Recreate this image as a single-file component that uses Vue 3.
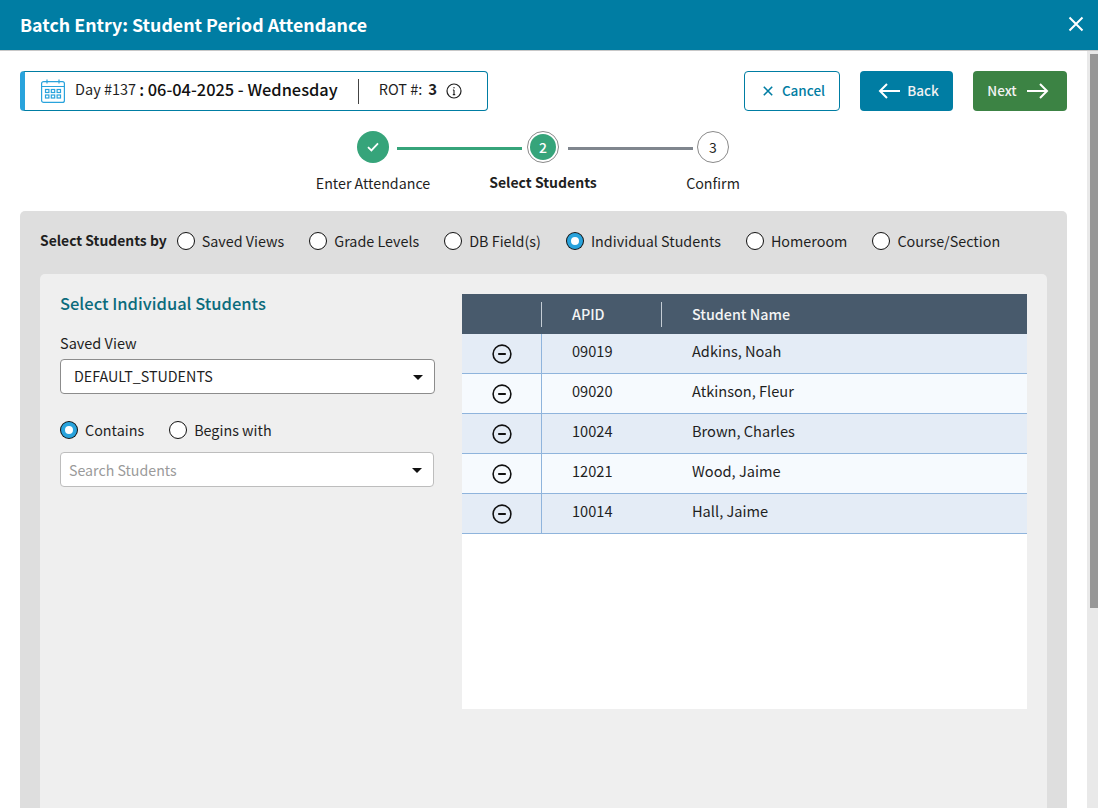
<script setup>
const stepLabels = [
  { label: 'Enter Attendance', cls: '' },
  { label: 'Select Students', cls: 'bold' },
  { label: 'Confirm', cls: '' },
]
const modes = [
  { label: 'Saved Views', on: false },
  { label: 'Grade Levels', on: false },
  { label: 'DB Field(s)', on: false },
  { label: 'Individual Students', on: true },
  { label: 'Homeroom', on: false },
  { label: 'Course/Section', on: false },
]
const students = [
  { id: '09019', name: 'Adkins, Noah' },
  { id: '09020', name: 'Atkinson, Fleur' },
  { id: '10024', name: 'Brown, Charles' },
  { id: '12021', name: 'Wood, Jaime' },
  { id: '10014', name: 'Hall, Jaime' },
]
</script>

<template>
  <div class="modal">
    <header class="titlebar">
      <h1>Batch Entry: Student Period Attendance</h1>
      <svg class="close" width="16" height="16" viewBox="0 0 16 16"><path d="M1.5 1.5l13 13M14.5 1.5l-13 13" stroke="#fff" stroke-width="2" fill="none"/></svg>
    </header>
    <div class="body">
      <main class="content">
        <div class="toolbar">
          <div class="daybox">
            <svg class="cal" width="24" height="24" viewBox="0 0 24 24" fill="none" stroke="#29a3dc" stroke-width="1.2">
              <rect x="0.6" y="2.6" width="22.8" height="20.8" rx="2"/>
              <path d="M1 7.5h22M6 0.5v4M18 0.5v4"/>
              <g fill="none">
                <rect x="4.5" y="10.5" width="3.4" height="3"/><rect x="10.3" y="10.5" width="3.4" height="3"/><rect x="16.1" y="10.5" width="3.4" height="3"/>
                <rect x="4.5" y="16" width="3.4" height="3"/><rect x="10.3" y="16" width="3.4" height="3"/><rect x="16.1" y="16" width="3.4" height="3"/>
              </g>
            </svg>
            <span class="day">Day #137</span>
            <span class="date">: 06-04-2025 - Wednesday</span>
            <span class="divider"></span>
            <span class="rot">ROT #:</span>
            <b class="rotnum">3</b>
            <svg class="info" width="16" height="16" viewBox="0 0 16 16" fill="none" stroke="#1f1f1f" stroke-width="1.2">
              <circle cx="8" cy="8" r="7"/><path d="M8 7v4.6M6.8 11.6h2.4M6.9 7h1.1" stroke-width="1.1"/><circle cx="8" cy="4.7" r=".7" fill="#1f1f1f" stroke="none"/>
            </svg>
          </div>
          <div class="actions">
            <button class="btn cancel">
              <svg width="10" height="10" viewBox="0 0 10 10"><path d="M.8.8l8.4 8.4M9.2.8L.8 9.2" stroke="#007da3" stroke-width="1.6" fill="none"/></svg>
              <span>Cancel</span>
            </button>
            <button class="btn back">
              <svg width="23" height="16" viewBox="0 0 23 16" fill="none" stroke="#fff" stroke-width="2"><path d="M22 8H2M9 1L2 8l7 7"/></svg>
              <span>Back</span>
            </button>
            <button class="btn next">
              <span>Next</span>
              <svg width="23" height="16" viewBox="0 0 23 16" fill="none" stroke="#fff" stroke-width="2"><path d="M1 8h20M14 1l7 7-7 7"/></svg>
            </button>
          </div>
        </div>

        <div class="stepper">
          <div class="dots">
            <span class="dot done">
              <svg width="12" height="10" viewBox="0 0 12 10" fill="none" stroke="#fff" stroke-width="1.8"><path d="M1 5.2l3.4 3.2L11 1.4"/></svg>
            </span>
            <span class="line green"></span>
            <span class="dot current"><span>2</span></span>
            <span class="line grey"></span>
            <span class="dot todo">3</span>
          </div>
          <div class="labels">
            <span v-for="s in stepLabels" :key="s.label" :class="s.cls">{{ s.label }}</span>
          </div>
        </div>

        <section class="panel">
          <div class="modes">
            <strong class="by">Select Students by</strong>
            <label v-for="m in modes" :key="m.label" class="radio">
              <span class="circle" :class="{ on: m.on }"></span><span class="rtext">{{ m.label }}</span>
            </label>
          </div>
          <div class="inner">
            <div class="left">
              <h2>Select Individual Students</h2>
              <div class="fieldlabel">Saved View</div>
              <div class="select dark">DEFAULT_STUDENTS<span class="caret"></span></div>
              <div class="match">
                <label class="radio"><span class="circle on"></span><span class="rtext">Contains</span></label>
                <label class="radio"><span class="circle"></span><span class="rtext">Begins with</span></label>
              </div>
              <div class="select light">Search Students<span class="caret"></span></div>
            </div>
            <div class="right">
              <div class="thead">
                <div class="c0"></div>
                <div class="c1">APID</div>
                <div class="c2">Student Name</div>
              </div>
              <div v-for="s in students" :key="s.id" class="row">
                <div class="c0">
                  <svg width="20" height="20" viewBox="0 0 20 20" fill="none" stroke="#111" stroke-width="1.6"><circle cx="10" cy="10" r="8.9"/><path d="M6.2 10h7.6" stroke-width="2"/></svg>
                </div>
                <div class="c1">{{ s.id }}</div>
                <div class="c2">{{ s.name }}</div>
              </div>
            </div>
          </div>
        </section>
      </main>
      <div class="scrollbar"><div class="thumb"></div></div>
    </div>
  </div>
</template>

<style>
html, body { margin: 0; overflow: hidden; background: #fff; }
</style>

<style scoped>
* { box-sizing: border-box; }
.modal {
  width: 1098px; height: 808px; display: flex; flex-direction: column; overflow: hidden;
  font-family: "Noto Sans CJK SC", "Noto Sans", sans-serif; font-size: 14.3px; color: #1f1f1f; background: #fff;
}
.titlebar {
  height: 51px; flex: none; background: #007da3; border-bottom: 1px solid #c8c8c8;
  display: flex; align-items: center; justify-content: space-between; padding: 0 14px 2px 20px;
}
h1 { margin: 0; font-size: 17.8px; font-weight: 600; color: #fff; }
.close { display: block; }
.body { flex: 1; display: flex; min-height: 0; }
.content { flex: 1; padding: 20px 20px 0; min-width: 0; overflow: hidden; }
.toolbar { display: flex; justify-content: space-between; align-items: center; height: 40px; }
.daybox {
  width: 468px; height: 40px; border: 1px solid #007da3; border-left: 5px solid #29a3dc; border-radius: 4px;
  display: flex; align-items: center; padding-left: 16px; line-height: 20px;
}
.cal { margin-right: 10px; }
.day, .date, .rot, .rotnum { position: relative; top: -2px; }
.day { font-size: 14.5px; }
.date { font-size: 16.4px; font-weight: 500; margin-left: 3px; color: #111; }
.divider { width: 1px; height: 25px; background: #444; margin: 0 20px; }
.rot { font-size: 14.5px; }
.rotnum { font-size: 15px; font-weight: 600; margin: 0 9px 0 6px; }
.actions { display: flex; gap: 20px; }
.btn {
  height: 40px; border-radius: 4px; font-family: inherit; font-size: 13.5px; font-weight: 500;
  display: flex; align-items: center; justify-content: center; padding: 0; border: 0; color: #f2f2f2;
}
.btn span { position: relative; top: -1px; }
.cancel { width: 96px; background: #fff; border: 1px solid #007da3; color: #007da3; gap: 9px; padding-left: 4px; }
.back { width: 93px; background: #007da3; gap: 6px; padding-left: 4px; }
.next { width: 94px; background: #3c8344; gap: 9px; padding-right: 4px; }
.stepper { margin-top: 20px; }
.dots { display: flex; align-items: center; padding-left: 337px; height: 32px; }
.dot {
  width: 32px; height: 32px; border-radius: 50%; flex: none;
  display: flex; align-items: center; justify-content: center; font-size: 14px;
}
.done { background: #36a47a; }
.current { border: 1px solid #8a8a8a; background: #fff; padding: 2px; color: #fff; font-weight: 500; }
.current span { width: 100%; height: 100%; border-radius: 50%; background: #36a47a; display: flex; align-items: center; justify-content: center; }
.todo { border: 1px solid #8a8a8a; background: #fff; }
.line { width: 125px; height: 3px; margin: 2px 5px 0 8px; }
.line.green { background: #36a47a; }
.line.grey { background: #80868e; margin-left: 9px; margin-right: 4px; }
.labels { height: 31px; display: grid; grid-template-columns: 170px 170px 170px; margin-left: 268px; padding-top: 9px; }
.labels span { text-align: center; font-size: 14.25px; line-height: 21px; }
.labels .bold { font-weight: 600; font-size: 14px; }
.panel { height: 620px; margin-top: 17px; background: #dedede; border-radius: 5px 5px 0 0; padding: 20px; }
.modes { display: flex; align-items: center; height: 20px; gap: 25px; margin-bottom: 23px; }
.by { font-weight: 600; font-size: 13.9px; margin-right: -15px; position: relative; top: -1px; }
.radio { display: flex; align-items: center; gap: 7px; font-size: 14.35px; }
.rtext { position: relative; top: -1px; }
.circle { width: 18px; height: 18px; border-radius: 50%; border: 1px solid #111; background: #fff; flex: none; }
.circle.on { background: #fff; border: 4px solid #29a3dc; box-shadow: 0 0 0 1px #111; width: 16px; height: 16px; margin: 1px; }
.inner { height: 560px; background: #efefef; border-radius: 5px 5px 0 0; padding: 18px 20px 0; display: flex; }
.left { width: 375px; flex: none; }
h2 { margin: 0; font-size: 16.5px; line-height: 22px; font-weight: 500; color: #0b6b7c; }
.fieldlabel { margin-top: 18px; font-size: 14.5px; line-height: 21px; }
.select {
  position: relative; background: #fff; border-radius: 4px; display: flex; align-items: center;
  border: 1px solid #8c8c8c; height: 35px; margin-top: 6px; padding: 0 0 2px 13px; font-size: 14.3px;
}
.select.light { width: 374px; border-color: #bdbdbd; padding: 0 0 0 8px; color: #9a9a9a; font-size: 14.2px; margin-top: 0; }
.caret {
  position: absolute; right: 11px; top: 15px; width: 0; height: 0;
  border-left: 5px solid transparent; border-right: 5px solid transparent; border-top: 5px solid #111;
}
.match { display: flex; gap: 25px; height: 24px; margin: 24px 0 10px; align-items: center; }
.right { width: 565px; margin: 2px 0 0 27px; height: 415px; background: #fff; flex: none; }
.thead { height: 40px; background: #485a6c; display: flex; align-items: center; color: #f4f4f4; font-weight: 500; font-size: 14.3px; }
.thead .c0, .thead .c1 { height: 25px; border-right: 1px solid #c4ccd4; display: flex; align-items: center; }
.thead .c2 { height: 25px; display: flex; align-items: center; }
.thead .c1, .thead .c2 { line-height: 23px; padding-bottom: 2px; }
.c0 { width: 80px; flex: none; }
.c1 { width: 120px; flex: none; padding-left: 30px; }
.c2 { padding-left: 30px; }
.row { height: 40px; display: flex; align-items: stretch; border-bottom: 1px solid #8fb4dc; background: #e4ecf6; font-size: 14.6px; }
.row:nth-of-type(odd) { background: #f6fafe; }
.row .c0 { border-right: 1px solid #8fb4dc; display: flex; align-items: center; justify-content: center; padding-top: 1px; }
.row .c1, .row .c2 { line-height: 34px; }
.scrollbar { width: 11px; flex: none; background: #e9e9e9; padding: 3px 0 0 3px; }
.thumb { height: 554px; background: #979797; }
</style>
